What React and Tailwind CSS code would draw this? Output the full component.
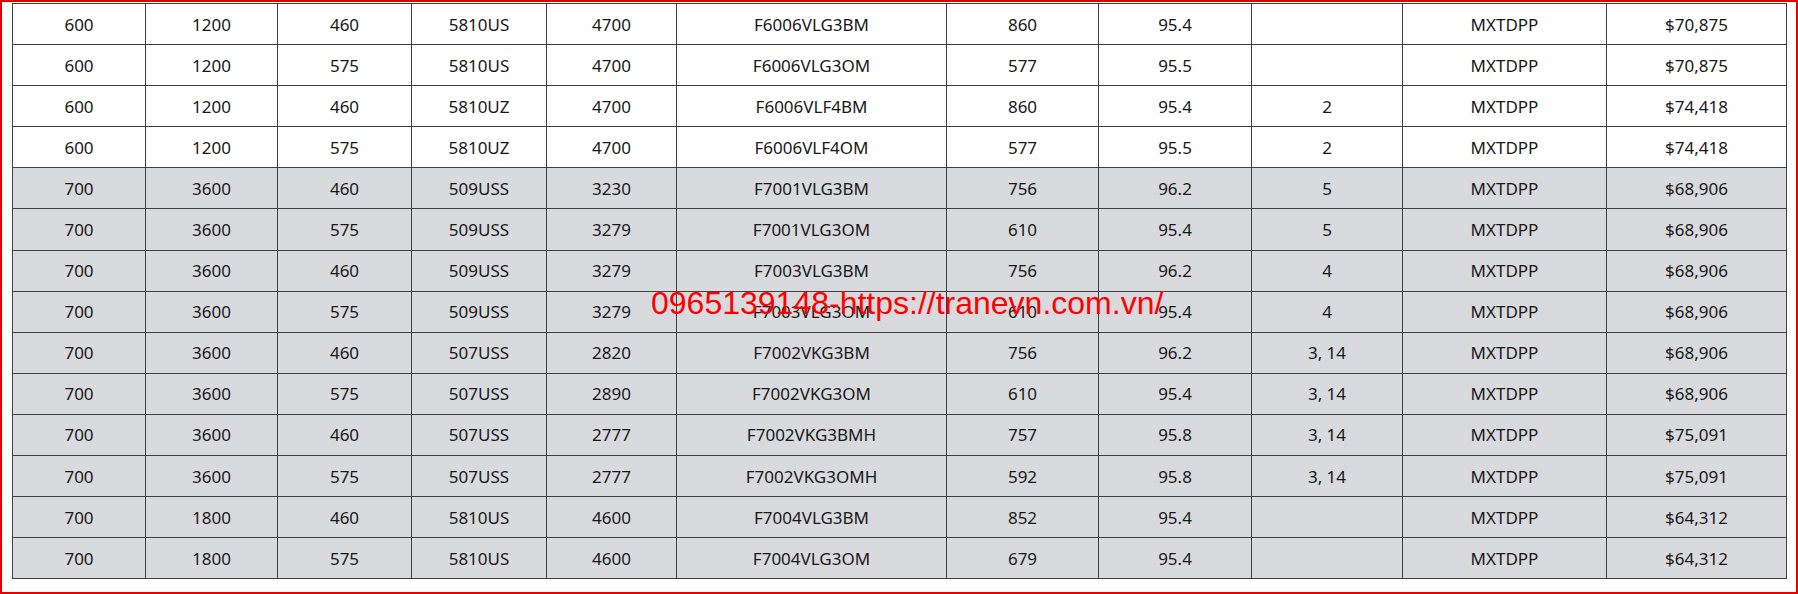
const columns = [133, 132, 134, 135, 130, 270, 152, 153, 151, 204, 180];

const rows = [
  ["600", "1200", "460", "5810US", "4700", "F6006VLG3BM", "860", "95.4", "", "MXTDPP", "$70,875"],
  ["600", "1200", "575", "5810US", "4700", "F6006VLG3OM", "577", "95.5", "", "MXTDPP", "$70,875"],
  ["600", "1200", "460", "5810UZ", "4700", "F6006VLF4BM", "860", "95.4", "2", "MXTDPP", "$74,418"],
  ["600", "1200", "575", "5810UZ", "4700", "F6006VLF4OM", "577", "95.5", "2", "MXTDPP", "$74,418"],
  ["700", "3600", "460", "509USS", "3230", "F7001VLG3BM", "756", "96.2", "5", "MXTDPP", "$68,906"],
  ["700", "3600", "575", "509USS", "3279", "F7001VLG3OM", "610", "95.4", "5", "MXTDPP", "$68,906"],
  ["700", "3600", "460", "509USS", "3279", "F7003VLG3BM", "756", "96.2", "4", "MXTDPP", "$68,906"],
  ["700", "3600", "575", "509USS", "3279", "F7003VLG3OM", "610", "95.4", "4", "MXTDPP", "$68,906"],
  ["700", "3600", "460", "507USS", "2820", "F7002VKG3BM", "756", "96.2", "3, 14", "MXTDPP", "$68,906"],
  ["700", "3600", "575", "507USS", "2890", "F7002VKG3OM", "610", "95.4", "3, 14", "MXTDPP", "$68,906"],
  ["700", "3600", "460", "507USS", "2777", "F7002VKG3BMH", "757", "95.8", "3, 14", "MXTDPP", "$75,091"],
  ["700", "3600", "575", "507USS", "2777", "F7002VKG3OMH", "592", "95.8", "3, 14", "MXTDPP", "$75,091"],
  ["700", "1800", "460", "5810US", "4600", "F7004VLG3BM", "852", "95.4", "", "MXTDPP", "$64,312"],
  ["700", "1800", "575", "5810US", "4600", "F7004VLG3OM", "679", "95.4", "", "MXTDPP", "$64,312"],
];

export default function App() {
  return (
    <div className="relative h-[594px] w-[1798px] overflow-hidden border-2 border-[#e60000] bg-white px-[10px] pt-[1px] font-['Noto_Sans',sans-serif]">
      <table className="w-[1774px] table-fixed border-collapse text-[17px] text-[#181818]">
        <colgroup>
          {columns.map((w, i) => (
            <col key={i} style={{ width: w }} />
          ))}
        </colgroup>
        <tbody>
          {rows.map((row, r) => (
            <tr key={r} className={r < 4 ? "h-[41.1px] bg-white" : "h-[41.1px] bg-[#d9dadd]"}>
              {row.map((cell, c) => (
                <td key={c} className="border border-[#404040] p-0 text-center leading-none">
                  {cell}
                </td>
              ))}
            </tr>
          ))}
        </tbody>
      </table>

      <div className="pointer-events-none absolute left-[649px] top-[285px] whitespace-nowrap font-['Liberation_Sans',Arial,sans-serif] text-[32px] leading-none text-[#ff0000]">
        0965139148-https://tranevn.com.vn/
      </div>
    </div>
  );
}
